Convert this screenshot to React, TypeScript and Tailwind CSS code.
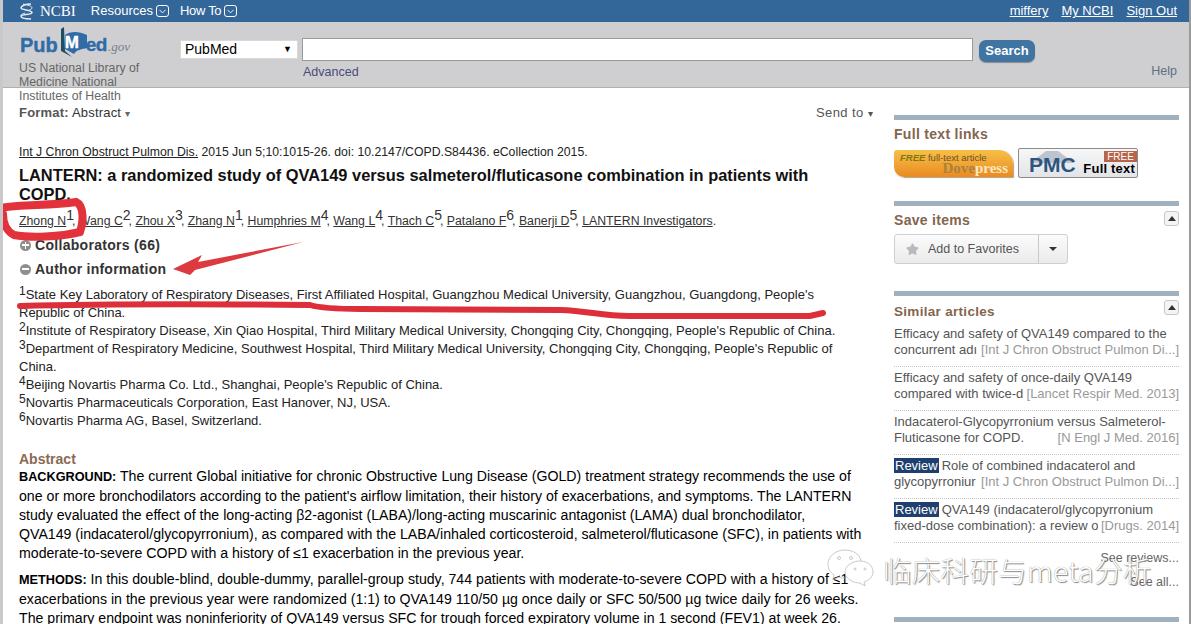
import React from 'react';
import { ChevronDown, Star } from 'lucide-react';

const authors = [
  ['Wang C', '2'],
  ['Zhou X', '3'],
  ['Zhang N', '1'],
  ['Humphries M', '4'],
  ['Wang L', '4'],
  ['Thach C', '5'],
  ['Patalano F', '6'],
  ['Banerji D', '5'],
];

const affiliations = [
  ['1', "State Key Laboratory of Respiratory Diseases, First Affiliated Hospital, Guangzhou Medical University, Guangzhou, Guangdong, People's Republic of China."],
  ['2', "Institute of Respiratory Disease, Xin Qiao Hospital, Third Military Medical University, Chongqing City, Chongqing, People's Republic of China."],
  ['3', "Department of Respiratory Medicine, Southwest Hospital, Third Military Medical University, Chongqing City, Chongqing, People's Republic of China."],
  ['4', "Beijing Novartis Pharma Co. Ltd., Shanghai, People's Republic of China."],
  ['5', 'Novartis Pharmaceuticals Corporation, East Hanover, NJ, USA.'],
  ['6', 'Novartis Pharma AG, Basel, Switzerland.'],
];

const similar = [
  { t1: 'Efficacy and safety of QVA149 compared to the', t2: 'concurrent adı', j: '[Int J Chron Obstruct Pulmon Di...]' },
  { t1: 'Efficacy and safety of once-daily QVA149', t2: 'compared with twice-d', j: '[Lancet Respir Med. 2013]' },
  { t1: 'Indacaterol-Glycopyrronium versus Salmeterol-', t2: 'Fluticasone for COPD.', j: '[N Engl J Med. 2016]' },
  { t1: 'Role of combined indacaterol and', t2: 'glycopyrroniur', j: '[Int J Chron Obstruct Pulmon Di...]', review: true },
  { t1: 'QVA149 (indacaterol/glycopyrronium', t2: 'fixed-dose combination): a review o', j: '[Drugs. 2014]', review: true },
];

const Collapse = () => (
  <span className="w-[15px] h-[15px] rounded-[3px] border border-[#c8c8c8] bg-[#f4f4f4] flex items-center justify-center">
    <span className="w-0 h-0 border-x-[4px] border-x-transparent border-b-[5px] border-b-[#333]" />
  </span>
);

const CircleSign = ({ plus }: { plus?: boolean }) => (
  <span className="relative ml-[1px] w-[11px] h-[11px] rounded-full bg-[#8f8f8f] flex items-center justify-center">
    <span className="w-[7px] h-[1.5px] bg-white" />
    {plus && <span className="absolute w-[1.5px] h-[7px] bg-white" />}
  </span>
);

const Chevron = () => (
  <span className="ml-[3px] w-[13px] h-[12px] rounded-[3px] border border-white flex items-center justify-center">
    <ChevronDown className="w-[11px] h-[11px] text-white" strokeWidth={2} />
  </span>
);

export default function App() {
  return (
    <div className="relative w-[1191px] h-[624px] overflow-hidden bg-white border-l-[3px] border-l-[#c9c9c9] border-r-[2px] border-r-[#9a9a9a] font-['Liberation_Sans',sans-serif]">
      <div className="h-full flex flex-col">
        {/* NCBI bar */}
        <header className="h-[22px] shrink-0 bg-[#336699] flex items-center text-white text-[13px] pl-[16px] pr-[12px]">
          <svg width="15" height="17" viewBox="0 0 15 17" fill="none" stroke="#e4ebf3" strokeWidth="1.5">
            <path d="M12 1C6 1 2 3 2 5S13 7 13 9.500 2 11 2 13 6 16 12 16" />
            <path d="M4 1C9 2 13 3 13 5 13 6 11 7 9 7.500M6 10C4 10.500 2 11.500 2 12.500" strokeWidth="1" />
          </svg>
          <span className="ml-[6px] font-['Liberation_Serif',serif] text-[15px]">NCBI</span>
          <span className="ml-[15px]">Resources</span>
          <Chevron />
          <span className="ml-[11px] tracking-[-0.3px]">How To</span>
          <Chevron />
          <div className="ml-auto flex gap-[13px]">
            <span className="underline">miffery</span>
            <span className="underline">My NCBI</span>
            <span className="underline">Sign Out</span>
          </div>
        </header>

        {/* Search band */}
        <div className="h-[66px] shrink-0 bg-[#cfcfd1] border-b border-[#b0b0b0] flex pl-[16px] pr-[12px]">
          <div className="w-[160px] shrink-0 pt-[5px]">
            <div className="h-[30px] flex items-end text-[#2f6ca8] font-bold text-[20px] leading-[24px] [-webkit-text-stroke:0.4px_#2f6ca8]">
              <span className="ml-[1px]">Pub</span>
              <span className="relative w-[29px] h-[30px] shrink-0">
                <svg width="29" height="30" viewBox="0 0 29 30" className="absolute left-0 top-0">
                  <path d="M3 23 L3 2 L6 0 L7 24 L14 30 L3 24 Z" fill="#1f4e63" />
                  <path d="M7 8 C12 4 21 4 29 8 L29 21 C24 22 18 23 16 27 L7 22 Z" fill="#2f6ca8" />
                </svg>
                <span className="absolute left-[7px] top-[7px] text-white text-[17px] leading-[18px] [-webkit-text-stroke:0.4px_#fff]">M</span>
              </span>
              <span className="-ml-[1px] text-[19px] tracking-[-0.5px]">ed</span>
              <span className="ml-[1px] font-['Liberation_Serif',serif] italic font-normal text-[13px] leading-[20px] text-[#77808c] [-webkit-text-stroke:0]">.gov</span>
            </div>
            <div className="mt-[4px] w-[125px] text-[12.3px] leading-[14px] text-[#666]">
              US National Library of Medicine National Institutes of Health
            </div>
          </div>
          <div className="w-[118px] shrink-0 h-[19px] mt-[18px] ml-[1px] bg-white border border-[#d8d8d8] flex items-center justify-between pl-[4px] pr-[5px] text-[14px] text-black">
            <span>PubMed</span>
            <span className="text-[9px]">▼</span>
          </div>
          <div className="ml-[4px]">
            <div className="w-[671px] h-[23px] mt-[16px] bg-white border border-[#9a9a9a]" />
            <div className="mt-[3px] pl-[1px] text-[12.5px] leading-[16px] text-[#4a4a7c]">Advanced</div>
          </div>
          <div className="ml-[6px] mt-[18px] w-[56px] h-[22px] rounded-[7px] bg-[#3f74a3] text-white font-bold text-[13px] flex items-center justify-center shadow-[0_1px_1px_#8a8a8a]">
            Search
          </div>
          <div className="ml-auto mt-[41px] text-[12.5px] leading-[16px] text-[#5d7083]">Help</div>
        </div>

        <div className="flex-1 flex min-h-0 overflow-hidden pl-[16px]">
          {/* Article column */}
          <main className="w-[846px] shrink-0 text-black">
            <div className="flex justify-between pt-[17px] h-[39px] text-[13px] leading-[16px] tracking-[0.2px] text-[#333]">
              <div>
                <span className="font-bold text-[#555]">Format:</span> Abstract <span className="text-[10px] text-[#666]">▾</span>
              </div>
              <div className="mr-[-8px] text-[#555] tracking-[0.4px]">Send to <span className="text-[10px]">▾</span></div>
            </div>
            <div className="mt-[17px] text-[12.25px] leading-[16px] text-[#222]">
              <span className="underline">Int J Chron Obstruct Pulmon Dis.</span> 2015 Jun 5;10:1015-26. doi: 10.2147/COPD.S84436. eCollection 2015.
            </div>
            <h1 className="mt-[6px] pr-[40px] text-[16.4px] leading-[19px] font-bold text-[#111]">
              LANTERN: a randomized study of QVA149 versus salmeterol/fluticasone combination in patients with COPD.
            </h1>
            <div className="mt-[5px] h-[24px] text-[12.3px] leading-[24px] text-[#333] whitespace-nowrap">
              <span className="underline">Zhong N</span>
              <sup className="text-[14px] top-[-5px] -mr-[2px]">1</sup>
              {authors.map(([name, n]) => (
                <span key={name}>
                  , <span className="underline">{name}</span>
                  <sup className="text-[14px] top-[-5px] -mr-[2px]">{n}</sup>
                </span>
              ))}
              , <span className="underline">LANTERN Investigators</span>.
            </div>
            <div className="h-[24px] flex items-center gap-[4px] text-[14px] tracking-[0.3px] font-bold text-[#333]">
              <CircleSign plus />
              <span>Collaborators (66)</span>
            </div>
            <div className="h-[24px] flex items-center gap-[4px] text-[14px] tracking-[0.25px] font-bold text-[#333]">
              <CircleSign />
              <span>Author information</span>
            </div>
            <div className="mt-[5px] text-[13px] leading-[18px] text-[#222]">
              {affiliations.map(([n, text]) => (
                <div key={n}>
                  <sup className="text-[12px] top-[-4px]">{n}</sup>
                  {text}
                </div>
              ))}
            </div>
            <h3 className="mt-[21px] text-[14px] leading-[16px] font-bold text-[#8b6a50]">Abstract</h3>
            <p className="text-[14.15px] leading-[19px] pr-[2px]">
              <b className="text-[12.7px]">BACKGROUND:</b> The current Global initiative for chronic Obstructive Lung Disease (GOLD) treatment strategy recommends the use of one or more bronchodilators according to the patient's airflow limitation, their history of exacerbations, and symptoms. The LANTERN study evaluated the effect of the long-acting β2-agonist (LABA)/long-acting muscarinic antagonist (LAMA) dual bronchodilator,<br />QVA149 (indacaterol/glycopyrronium), as compared with the LABA/inhaled corticosteroid, salmeterol/fluticasone (SFC), in patients with moderate-to-severe COPD with a history of ≤1 exacerbation in the previous year.
            </p>
            <p className="mt-[7px] text-[14.15px] leading-[19px] pr-[2px]">
              <b className="text-[12.7px]">METHODS:</b> In this double-blind, double-dummy, parallel-group study, 744 patients with moderate-to-severe COPD with a history of ≤1 exacerbations in the previous year were randomized (1:1) to QVA149 110/50 µg once daily or SFC 50/500 µg twice daily for 26 weeks. The primary endpoint was noninferiority of QVA149 versus SFC for trough forced expiratory volume in 1 second (FEV1) at week 26.
            </p>
          </main>

          {/* Sidebar */}
          <aside className="ml-[29px] w-[285px] shrink-0 pt-[27px]">
            <div className="h-[5px] bg-[#9fb0bf]" />
            <h3 className="mt-[5px] text-[14px] leading-[18px] tracking-[0.3px] font-bold text-[#84654e]">Full text links</h3>
            <div className="mt-[5px] flex items-center gap-[5px]">
              <div className="w-[119px] h-[27px] rounded-tl-[3px] rounded-tr-[14px] rounded-bl-[10px] bg-gradient-to-b from-[#f6c048] to-[#ea8a20] shadow-[1px_1px_1px_#b5a58a] pl-[6px] leading-none">
                <div className="pt-[3px] text-[9.5px] text-[#6a5320] whitespace-nowrap"><i className="font-bold text-[#7a7a14]">FREE</i> full-text article</div>
                <div className="-mt-[1px] text-right pr-[5px] text-[15px] font-bold font-['Liberation_Serif',serif] text-[#a8813f]">Dove<span className="text-[#fbe6c0]">press</span></div>
              </div>
              <div className="relative w-[120px] h-[30px] rounded-[2px] border border-[#8c8c8c] bg-gradient-to-b from-[#f7f7f7] to-[#e2e4e8] overflow-hidden">
                <svg width="44" height="14" viewBox="0 0 44 14" className="absolute left-[11px] top-0">
                  <path d="M0 14 L16 2 L28 2 L44 14 Z" fill="#bcc5ce" />
                </svg>
                <span className="absolute left-[10px] top-[4px] text-[21px] leading-[23px] font-bold text-[#2d5580]">PMC</span>
                <span className="absolute right-0 top-[2px] w-[33px] h-[11px] bg-[#b8644a] text-white text-[10px] leading-[11px] text-center">FREE</span>
                <span className="absolute right-[2px] bottom-[1px] text-[13px] leading-[15px] font-bold text-black tracking-[0.2px]">Full text</span>
              </div>
            </div>

            <div className="mt-[23px] h-[5px] bg-[#9fb0bf]" />
            <div className="mt-[5px] flex justify-between items-start">
              <h3 className="text-[14px] leading-[18px] tracking-[0.3px] font-bold text-[#84654e]">Save items</h3>
              <Collapse />
            </div>
            <div className="mt-[5px] w-[174px] h-[30px] rounded-[3px] border border-[#d0d0d0] bg-gradient-to-b from-[#fbfbfb] to-[#ebebeb] flex items-center text-[12.5px] text-[#555]">
              <span className="flex-1 flex items-center gap-[9px] pl-[11px]">
                <Star className="w-[13px] h-[13px] fill-[#b9b9bf] text-[#b9b9bf]" />
                Add to Favorites
              </span>
              <span className="w-[29px] h-full border-l border-[#c8c8c8] flex items-center justify-center">
                <span className="w-0 h-0 border-x-[4px] border-x-transparent border-t-[4px] border-t-[#333]" />
              </span>
            </div>

            <div className="mt-[27px] h-[5px] bg-[#9fb0bf]" />
            <div className="mt-[4px] flex justify-between items-start">
              <h3 className="mt-[3px] text-[13.5px] leading-[18px] tracking-[0.3px] font-bold text-[#84654e]">Similar articles</h3>
              <Collapse />
            </div>
            <div className="mt-[2px] text-[13px] leading-[16px] text-[#555]">
              {similar.map(s => (
                <div key={s.t1} className="h-[44px] pt-[3px] border-b border-dotted border-[#c4c4c4]">
                  <div className="whitespace-nowrap">
                    {s.review && <span className="mr-[3px] px-[1px] bg-[#1f3f6e] text-white">Review</span>}
                    {s.t1}
                  </div>
                  <div className="flex justify-between whitespace-nowrap">
                    <span className="min-w-0 overflow-hidden">{s.t2}</span>
                    <span className="shrink-0 pl-[3px] text-[#999]">{s.j}</span>
                  </div>
                </div>
              ))}
            </div>
            <div className="mt-[7px] text-right text-[12.5px] leading-[16px] text-[#666]">See reviews...</div>
            <div className="mt-[8px] text-right text-[12.5px] leading-[16px] text-[#666]">See all...</div>
            <div className="mt-[27px] h-[5px] bg-[#9fb0bf]" />
          </aside>
        </div>
      </div>

      {/* Red hand annotations */}
      <svg width="1191" height="624" viewBox="0 0 1191 624" fill="none" className="absolute -left-[3px] top-0 pointer-events-none">
        <path d="M0 208 C20 204 50 206 76 202 C85 206 83 224 80 232 C60 237 30 238 14 235 C6 231 3 222 3 214" stroke="#e2333c" strokeWidth="8" strokeLinecap="round" />
        <path d="M20 306 C100 304 200 304 310 305 C320 308 335 309 360 309 L560 310 C590 311 600 316 630 316 L810 316 L823 313" stroke="#dc2f3a" strokeWidth="6" strokeLinecap="round" />
        <path d="M303 242 L198 262 L202 255 L173 269 L190 275 L195 270 Z" fill="#dc3a3f" />
      </svg>

      {/* WeChat watermark */}
      <div className="absolute left-[824px] top-[548px] flex items-center text-white pointer-events-none">
        <svg width="48" height="44" viewBox="0 0 48 44" fill="none" stroke="#bdbdbd" strokeWidth="0.8">
          <path d="M18 2 C8 2 1 9 1 16 C1 21 3 24 7 27 L6 32 L11 29 C13 30 15 30 18 30" />
          <path d="M18 2 C27 2 33 7 34 13" />
          <path d="M33 13 C25 13 18 18 18 24 C18 30 25 35 33 35 L38 38 L37 34 C42 32 46 29 46 24 C46 18 41 13 33 13 Z" />
          <circle cx="12" cy="10" r="1.500" />
          <circle cx="24" cy="10" r="1.500" />
          <circle cx="28" cy="21" r="1" />
          <circle cx="38" cy="21" r="1" />
        </svg>
        <span className="ml-[8px] text-[28.5px] leading-[40px] tracking-[0.3px] font-['Noto_Sans_CJK_SC','Liberation_Sans',sans-serif] font-light [text-shadow:0_0_1px_#888,1px_1px_1px_#888]">
          临床科研与meta分析
        </span>
      </div>
    </div>
  );
}
